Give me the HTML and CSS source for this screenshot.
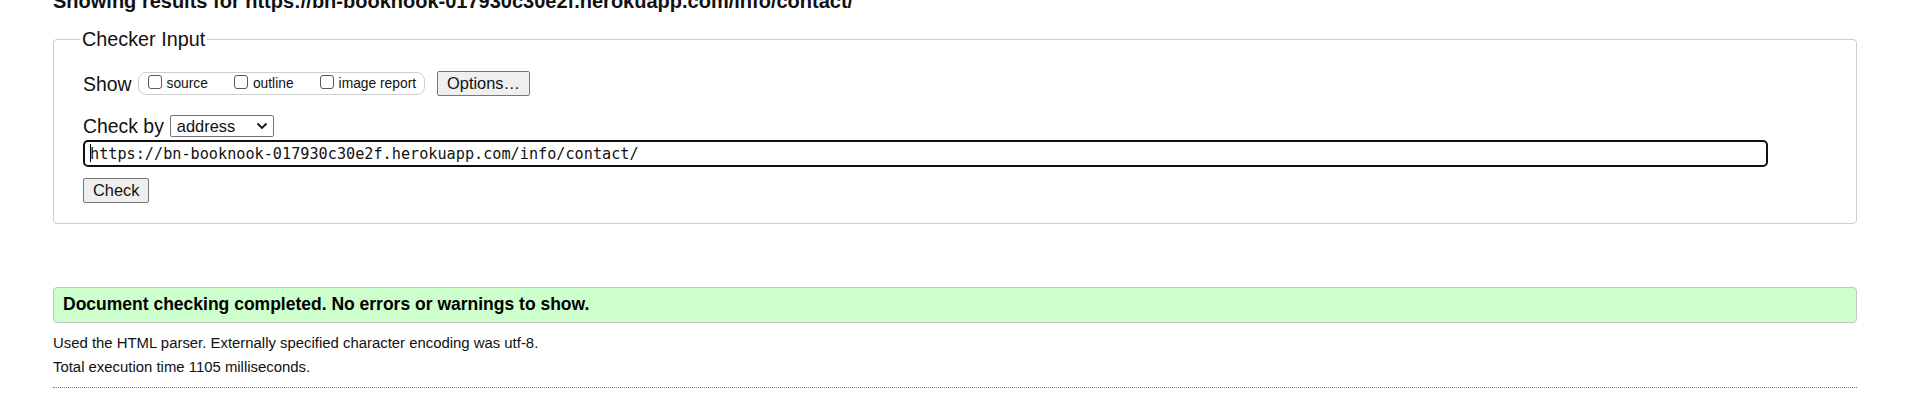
FILE: index.html
```html
<!DOCTYPE html>
<html lang="en">
<head>
<meta charset="utf-8">
<title>Showing results for https://bn-booknook-017930c30e2f.herokuapp.com/info/contact/ - Nu Html Checker</title>
<link rel="stylesheet" href="styles.css">
</head>
<body>
<div class="page">
  <h2 class="title">Showing results for https://bn-booknook-017930c30e2f.herokuapp.com/info/contact/</h2>
  <fieldset class="checker">
    <legend class="checker-legend">Checker Input</legend>
    <div class="row show-row">
      <span class="row-label">Show</span>
      <span class="show-box">
        <label class="opt"><input class="chk" type="checkbox">source</label>
        <label class="opt"><input class="chk" type="checkbox">outline</label>
        <label class="opt"><input class="chk" type="checkbox">image report</label>
      </span>
      <button class="btn options-btn" type="button">Options…</button>
    </div>
    <div class="row by-row">
      <span class="row-label">Check by</span>
      <span class="select-wrap">
        <select class="by-select"><option>address</option></select>
        <svg class="chevron" width="12" height="8" viewBox="0 0 12 8"><path d="M1.5 1.5 L6 6 L10.5 1.5" fill="none" stroke="#111" stroke-width="1.8"/></svg>
      </span>
    </div>
    <div class="url-wrap">
      <input class="url-input" type="text" value="https://bn-booknook-017930c30e2f.herokuapp.com/info/contact/">
      <span class="caret"></span>
    </div>
    <div class="row check-row">
      <button class="btn" type="button">Check</button>
    </div>
  </fieldset>
  <div class="success">Document checking completed. No errors or warnings to show.</div>
  <p class="details">Used the HTML parser. Externally specified character encoding was utf-8.</p>
  <p class="details">Total execution time 1105 milliseconds.</p>
  <hr class="dotted">
</div>
</body>
</html>
```

FILE: styles.css
```css
html, body {
  margin: 0;
  padding: 0;
  background: #fff;
}

body {
  font-family: "Liberation Sans", Arial, sans-serif;
  color: #111;
  overflow: hidden;
}

.page {
  padding: 0 56px 0 53px;
}

.title {
  margin: -11px 0 0;
  font-size: 20px;
  line-height: 24px;
  font-weight: bold;
  white-space: nowrap;
}

.checker {
  margin: 16px 0 0;
  padding: 0 30px 20px 29px;
  border: 1px solid #cdcdcd;
  border-radius: 4px;
  min-inline-size: 0;
}

.checker-legend {
  margin-left: -3px;
  padding: 0 2px;
  font-size: 19.8px;
  line-height: 21px;
  color: #111;
}

.row {
  display: flex;
  align-items: center;
}

.show-row {
  margin-top: 21px;
  height: 25px;
}

.row-label {
  font-size: 19.4px;
  line-height: 22px;
  margin-right: 6px;
}

.show-box {
  display: flex;
  align-items: center;
  height: 21px;
  padding: 0 8px 0 9px;
  border: 1px solid #cfcfcf;
  border-radius: 8px;
  font-size: 13.8px;
  margin-right: 12px;
}

.opt {
  display: flex;
  align-items: center;
  margin-right: 26px;
  line-height: 16px;
}

.opt:last-child {
  margin-right: 0;
}

.chk {
  appearance: none;
  -webkit-appearance: none;
  width: 14px;
  height: 14px;
  margin: 0 5px 0 0;
  border: 1px solid #5a5a5a;
  border-radius: 3px;
  background: #fff;
  position: relative;
  top: -2px;
}

.btn {
  font-family: "Liberation Sans", Arial, sans-serif;
  font-size: 16.4px;
  line-height: 19px;
  height: 25px;
  padding: 0 9px;
  color: #111;
  background: #efefef;
  border: 1px solid #767676;
  border-radius: 2px;
}

.by-row {
  margin-top: 19px;
  height: 22px;
}

.select-wrap {
  position: relative;
  display: inline-block;
  height: 22px;
}

.by-select {
  appearance: none;
  -webkit-appearance: none;
  width: 104px;
  height: 22px;
  margin: 0;
  padding: 0 0 0 6px;
  font-family: "Liberation Sans", Arial, sans-serif;
  font-size: 16.4px;
  color: #111;
  background: #fff;
  border: 1px solid #767676;
  border-radius: 2px;
}

.chevron {
  position: absolute;
  left: 86px;
  top: 7px;
  pointer-events: none;
}

.url-wrap {
  position: relative;
  margin-top: 3px;
  width: 1685px;
  height: 27px;
}

.url-input {
  box-sizing: border-box;
  width: 1685px;
  height: 27px;
  margin: 0;
  padding: 0 0 0 5px;
  border: 2px solid #111;
  border-radius: 5px;
  font-family: "DejaVu Sans Mono", "Liberation Mono", monospace;
  font-size: 15.2px;
  color: #111;
  background: #fff;
  outline: none;
}

.caret {
  position: absolute;
  left: 7px;
  top: 4px;
  width: 1px;
  height: 18px;
  background: #000;
}

.check-row {
  margin-top: 11px;
  height: 25px;
}

.success {
  margin-top: 63px;
  height: 20px;
  padding: 6px 9px 8px;
  border: 1px solid #c6c6c6;
  border-radius: 4px;
  background: #ccffcc;
  font-size: 17.5px;
  line-height: 20px;
  font-weight: bold;
  color: #000;
}

.details {
  margin: 0;
  font-size: 14.9px;
  line-height: 20px;
}

.success + .details {
  margin-top: 10px;
}

.details + .details {
  margin-top: 4px;
}

.dotted {
  margin: 10px 0 0;
  height: 0;
  border: 0;
  border-top: 1px dotted #777;
}
```
